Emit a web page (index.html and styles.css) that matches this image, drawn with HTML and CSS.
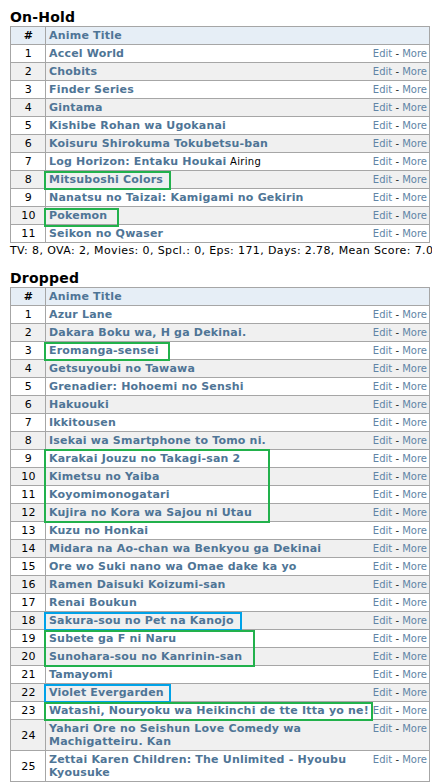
FILE: index.html
```html
<!DOCTYPE html>
<html lang="en">
  <head>
    <meta charset="UTF-8" />
    <meta name="viewport" content="width=device-width, initial-scale=1.0" />
    <title>Anime List</title>
    <link rel="stylesheet" href="styles.css">
  </head>
  <body>
    <h2 class="list-title">On-Hold</h2>
    <table class="list">
      <tr class="head"><th class="num">#</th><th class="title">Anime Title</th></tr>
      <tr><td class="num">1</td><td class="title"><span class="actions"><a>Edit</a> - <a>More</a></span><a class="name">Accel World</a></td></tr>
      <tr><td class="num">2</td><td class="title"><span class="actions"><a>Edit</a> - <a>More</a></span><a class="name">Chobits</a></td></tr>
      <tr><td class="num">3</td><td class="title"><span class="actions"><a>Edit</a> - <a>More</a></span><a class="name">Finder Series</a></td></tr>
      <tr><td class="num">4</td><td class="title"><span class="actions"><a>Edit</a> - <a>More</a></span><a class="name">Gintama</a></td></tr>
      <tr><td class="num">5</td><td class="title"><span class="actions"><a>Edit</a> - <a>More</a></span><a class="name">Kishibe Rohan wa Ugokanai</a></td></tr>
      <tr><td class="num">6</td><td class="title"><span class="actions"><a>Edit</a> - <a>More</a></span><a class="name">Koisuru Shirokuma Tokubetsu-ban</a></td></tr>
      <tr><td class="num">7</td><td class="title"><span class="actions"><a>Edit</a> - <a>More</a></span><a class="name">Log Horizon: Entaku Houkai</a> <span class="status">Airing</span></td></tr>
      <tr><td class="num">8</td><td class="title"><span class="mark green w127"></span><span class="actions"><a>Edit</a> - <a>More</a></span><a class="name">Mitsuboshi Colors</a></td></tr>
      <tr><td class="num">9</td><td class="title"><span class="actions"><a>Edit</a> - <a>More</a></span><a class="name">Nanatsu no Taizai: Kamigami no Gekirin</a></td></tr>
      <tr><td class="num">10</td><td class="title"><span class="mark green w75 low"></span><span class="actions"><a>Edit</a> - <a>More</a></span><a class="name">Pokemon</a></td></tr>
      <tr><td class="num">11</td><td class="title"><span class="actions"><a>Edit</a> - <a>More</a></span><a class="name">Seikon no Qwaser</a></td></tr>
    </table>
    <div class="stats">TV: 8, OVA: 2, Movies: 0, Spcl.: 0, Eps: 171, Days: 2.78, Mean Score: 7.0</div>

    <h2 class="list-title">Dropped</h2>
    <table class="list">
      <tr class="head"><th class="num">#</th><th class="title">Anime Title</th></tr>
      <tr><td class="num">1</td><td class="title"><span class="actions"><a>Edit</a> - <a>More</a></span><a class="name">Azur Lane</a></td></tr>
      <tr><td class="num">2</td><td class="title"><span class="actions"><a>Edit</a> - <a>More</a></span><a class="name">Dakara Boku wa, H ga Dekinai.</a></td></tr>
      <tr><td class="num">3</td><td class="title"><span class="mark green w126"></span><span class="actions"><a>Edit</a> - <a>More</a></span><a class="name">Eromanga-sensei</a></td></tr>
      <tr><td class="num">4</td><td class="title"><span class="actions"><a>Edit</a> - <a>More</a></span><a class="name">Getsuyoubi no Tawawa</a></td></tr>
      <tr><td class="num">5</td><td class="title"><span class="actions"><a>Edit</a> - <a>More</a></span><a class="name">Grenadier: Hohoemi no Senshi</a></td></tr>
      <tr><td class="num">6</td><td class="title"><span class="actions"><a>Edit</a> - <a>More</a></span><a class="name">Hakuouki</a></td></tr>
      <tr><td class="num">7</td><td class="title"><span class="actions"><a>Edit</a> - <a>More</a></span><a class="name">Ikkitousen</a></td></tr>
      <tr><td class="num">8</td><td class="title"><span class="actions"><a>Edit</a> - <a>More</a></span><a class="name">Isekai wa Smartphone to Tomo ni.</a></td></tr>
      <tr><td class="num">9</td><td class="title"><span class="mark green w226 rows4"></span><span class="actions"><a>Edit</a> - <a>More</a></span><a class="name">Karakai Jouzu no Takagi-san 2</a></td></tr>
      <tr><td class="num">10</td><td class="title"><span class="actions"><a>Edit</a> - <a>More</a></span><a class="name">Kimetsu no Yaiba</a></td></tr>
      <tr><td class="num">11</td><td class="title"><span class="actions"><a>Edit</a> - <a>More</a></span><a class="name">Koyomimonogatari</a></td></tr>
      <tr><td class="num">12</td><td class="title"><span class="actions"><a>Edit</a> - <a>More</a></span><a class="name">Kujira no Kora wa Sajou ni Utau</a></td></tr>
      <tr><td class="num">13</td><td class="title"><span class="actions"><a>Edit</a> - <a>More</a></span><a class="name">Kuzu no Honkai</a></td></tr>
      <tr><td class="num">14</td><td class="title"><span class="actions"><a>Edit</a> - <a>More</a></span><a class="name">Midara na Ao-chan wa Benkyou ga Dekinai</a></td></tr>
      <tr><td class="num">15</td><td class="title"><span class="actions"><a>Edit</a> - <a>More</a></span><a class="name">Ore wo Suki nano wa Omae dake ka yo</a></td></tr>
      <tr><td class="num">16</td><td class="title"><span class="actions"><a>Edit</a> - <a>More</a></span><a class="name">Ramen Daisuki Koizumi-san</a></td></tr>
      <tr><td class="num">17</td><td class="title"><span class="actions"><a>Edit</a> - <a>More</a></span><a class="name">Renai Boukun</a></td></tr>
      <tr><td class="num">18</td><td class="title"><span class="mark blue w198"></span><span class="actions"><a>Edit</a> - <a>More</a></span><a class="name">Sakura-sou no Pet na Kanojo</a></td></tr>
      <tr><td class="num">19</td><td class="title"><span class="mark green w211 rows2"></span><span class="actions"><a>Edit</a> - <a>More</a></span><a class="name">Subete ga F ni Naru</a></td></tr>
      <tr><td class="num">20</td><td class="title"><span class="actions"><a>Edit</a> - <a>More</a></span><a class="name">Sunohara-sou no Kanrinin-san</a></td></tr>
      <tr><td class="num">21</td><td class="title"><span class="actions"><a>Edit</a> - <a>More</a></span><a class="name">Tamayomi</a></td></tr>
      <tr><td class="num">22</td><td class="title"><span class="mark blue w127"></span><span class="actions"><a>Edit</a> - <a>More</a></span><a class="name">Violet Evergarden</a></td></tr>
      <tr><td class="num">23</td><td class="title"><span class="mark green w329"></span><span class="actions"><a>Edit</a> - <a>More</a></span><a class="name">Watashi, Nouryoku wa Heikinchi de tte Itta yo ne!</a></td></tr>
      <tr><td class="num">24</td><td class="title"><span class="actions"><a>Edit</a> - <a>More</a></span><a class="name">Yahari Ore no Seishun Love Comedy wa<br>Machigatteiru. Kan</a></td></tr>
      <tr><td class="num">25</td><td class="title"><span class="actions"><a>Edit</a> - <a>More</a></span><a class="name">Zettai Karen Children: The Unlimited - Hyoubu<br>Kyousuke</a></td></tr>
    </table>
  </body>
</html>
```

FILE: styles.css
```css
body {
  margin: 0;
  padding: 9px 0 0 10px;
  background: #fff;
  color: #000;
  font-family: "DejaVu Sans", Verdana, sans-serif;
  font-size: 11px;
  width: 440px;
  overflow: hidden;
}

.list-title {
  margin: 0;
  font-size: 14px;
  line-height: 17px;
  font-weight: bold;
  letter-spacing: 0.2px;
}

.list {
  border-collapse: collapse;
  width: 420px;
}

.list th,
.list td {
  border: 1px solid #a6a6a6;
  padding: 2px 2px 2px 3px;
  line-height: 13px;
  vertical-align: top;
}

.list tr:nth-child(odd) td {
  background: #f0f0f0;
}

.list .head th {
  background: #e6eef6;
  text-align: left;
  color: #4f7596;
  letter-spacing: 0.2px;
}

.list .num {
  width: 29px;
  text-align: center;
  vertical-align: middle;
  color: #000;
  letter-spacing: 0.3px;
}

.list .head .num {
  color: #000;
  text-align: center;
}

.title {
  position: relative;
}

.name {
  color: #4f7596;
  font-weight: bold;
  letter-spacing: 0.2px;
}

.status {
  color: #000;
  font-size: 10px;
  letter-spacing: 0.3px;
}

.actions {
  float: right;
  font-size: 10px;
  color: #222;
}

.actions a {
  color: #6185a6;
}

.stats {
  line-height: 14px;
  white-space: nowrap;
  letter-spacing: 0.38px;
  margin: 1px 0 12px;
}

/* hand drawn annotation boxes */
.mark {
  position: absolute;
  left: -2px;
  top: 0;
  height: 19px;
  box-sizing: border-box;
  border: 2px solid;
  pointer-events: none;
  z-index: 2;
}

.mark.low {
  top: 1px;
}

.green {
  border-color: #22b14c;
}

.blue {
  border-color: #00a2e8;
}

.rows2 {
  height: 37px;
}

.rows4 {
  height: 74px;
  top: -1px;
}

.w75 { width: 75px; }
.w126 { width: 126px; }
.w127 { width: 127px; }
.w198 { width: 198px; }
.w211 { width: 211px; }
.w226 { width: 226px; }
.w329 { width: 329px; }
```
